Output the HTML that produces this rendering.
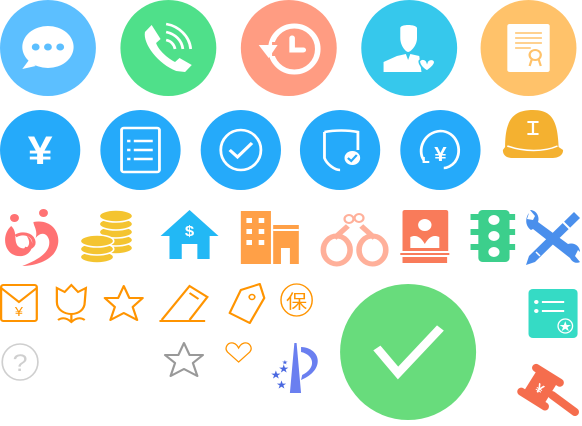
<!DOCTYPE html>
<html><head><meta charset="utf-8"><style>
html,body{margin:0;padding:0;background:#fff;width:582px;height:426px;overflow:hidden}
svg{display:block}
text{font-family:"Liberation Sans","Noto Sans CJK SC",sans-serif}
</style></head><body>
<svg width="582" height="426" viewBox="0 0 582 426" xmlns="http://www.w3.org/2000/svg">
<g transform="scale(1.115,1)">
<!-- Row 1 -->
<ellipse cx="43" cy="48" rx="43" ry="48" fill="#5cbfff"/>
<ellipse cx="43" cy="47" rx="23" ry="21" fill="#fff"/>
<path d="M26 60 L20 69 L32 66Z" fill="#fff"/>
<circle cx="32" cy="47" r="3.5" fill="#5cbfff"/><circle cx="43" cy="47" r="3.5" fill="#5cbfff"/><circle cx="54" cy="47" r="3.5" fill="#5cbfff"/>

<ellipse cx="151" cy="48" rx="43" ry="48" fill="#4fe08a"/>
<path d="M136 25 L130 32 C128 44 142 64 158 71 L166 72 L172 65 L161 58 L157 62 C150 58 142 50 140 43 L144 39 Z" fill="#fff"/>
<g fill="none" stroke="#fff" stroke-width="2.5"><path d="M149 24 C160 26 170 36 171 49"/><path d="M149 32 C157 34 163 40 164 49"/><path d="M149 40 C153 41 156 44 157 49"/></g>

<ellipse cx="259" cy="48" rx="43" ry="48" fill="#ff9c82"/>
<ellipse cx="264" cy="49" rx="21" ry="23" fill="none" stroke="#fff" stroke-width="5"/>
<rect x="244" y="42" width="8" height="14" fill="#ff9c82"/>
<path d="M232 45 L249 45 L241 58 Z" fill="#fff"/>
<path d="M262 38 L262 50 L272 50" fill="none" stroke="#fff" stroke-width="5" stroke-linecap="round"/>

<ellipse cx="367" cy="48" rx="43" ry="48" fill="#36c8ec"/>
<path d="M359 28 C359 24 373 24 374 28 L374 38 C374 46 368 52 366 52 C364 52 359 46 359 38Z" fill="#fff"/>
<path d="M344 62 L356 56 L364 54 L366 60 L368 54 L376 56 L378 72 L344 72Z" fill="#fff"/>
<path d="M376 61 C378 58 382 59 383 62 C384 59 389 58 390 62 C390 66 384 70 383 71 C381 70 376 66 376 61Z" fill="#fff" stroke="#36c8ec" stroke-width="1.5"/>

<ellipse cx="474" cy="48" rx="43" ry="48" fill="#ffc26a"/>
<rect x="455" y="24" width="38" height="48" rx="2" fill="#fff"/>
<g stroke="#ffc26a" stroke-width="1.5"><line x1="462" y1="33" x2="486" y2="33"/><line x1="462" y1="38" x2="486" y2="38"/><line x1="462" y1="43" x2="486" y2="43"/><line x1="462" y1="48" x2="476" y2="48"/></g>
<circle cx="480" cy="55" r="5" fill="none" stroke="#ffc26a" stroke-width="2"/>
<path d="M477 59 L475 66 M483 59 L485 66" stroke="#ffc26a" stroke-width="2"/>

<!-- Row 2 -->
<g fill="#25aafa">
<ellipse cx="36" cy="150" rx="36" ry="40"/>
<ellipse cx="126" cy="150" rx="36" ry="40"/>
<ellipse cx="216" cy="150" rx="36" ry="40"/>
<ellipse cx="305" cy="150" rx="36" ry="40"/>
<ellipse cx="395" cy="150" rx="36" ry="40"/>
</g>
<text x="36" y="164" font-size="40" font-weight="bold" fill="#fff" text-anchor="middle">¥</text>
<rect x="109" y="128" width="34" height="44" rx="2" fill="none" stroke="#fff" stroke-width="2.5"/>
<g stroke="#fff" stroke-width="2.5"><line x1="114" y1="141" x2="117" y2="141"/><line x1="120" y1="141" x2="137" y2="141"/><line x1="114" y1="150" x2="117" y2="150"/><line x1="120" y1="150" x2="137" y2="150"/><line x1="114" y1="159" x2="117" y2="159"/><line x1="120" y1="159" x2="137" y2="159"/></g>
<ellipse cx="216" cy="150" rx="18" ry="20" fill="none" stroke="#fff" stroke-width="2.5"/>
<path d="M206 150 L213 157 L226 143" fill="none" stroke="#fff" stroke-width="3"/>
<path d="M291 132 C300 130 312 130 321 132 L321 150 M291 132 L291 158 C293 164 300 170 305 170" fill="none" stroke="#fff" stroke-width="2.5"/>
<circle cx="316" cy="158" r="7" fill="#fff"/>
<path d="M312 158 L315 161 L320 155" fill="none" stroke="#25aafa" stroke-width="2"/>
<path d="M380 160 C374 150 380 132 395 131 C409 131 416 150 408 162 C405 166 401 168 398 168" fill="none" stroke="#fff" stroke-width="2.5"/>
<path d="M380 157 L380 162 L385 162" fill="none" stroke="#fff" stroke-width="2"/>
<text x="395" y="161" font-size="20" font-weight="bold" fill="#fff" text-anchor="middle">¥</text>

<!-- helmet -->
<path d="M453 147 C453 120 460 110 478 110 C496 110 500 122 501 147 L505 150 C505 156 500 158 495 158 L460 158 C455 158 451 156 451 150Z" fill="#f4b130"/>
<path d="M455 146 C470 152 488 152 500 146" fill="none" stroke="#fff" stroke-width="1.5"/>
<path d="M473 122 L483 122 M478 122 L478 134 M473 134 L483 134" stroke="#fff" stroke-width="2"/>

<!-- Row 3 -->
<circle cx="13" cy="218" r="4" fill="#ff7273"/><circle cx="39" cy="213" r="4" fill="#ff7273"/>
<path d="M10 226 C0 236 4 258 20 256 C30 254 32 240 24 236 C30 246 22 252 16 246 C12 240 16 232 10 226Z" fill="#ff7273"/>
<path d="M30 222 C50 218 58 240 48 254 C40 264 26 266 20 266 C34 260 46 252 44 240 C42 232 36 232 32 238 C34 230 30 226 30 222Z" fill="#ff7273"/>
<path d="M14 236 C20 232 28 234 30 240 C32 246 26 250 22 248" fill="none" stroke="#ff7273" stroke-width="3"/>

<g fill="#f4c430" stroke="#fff" stroke-width="1.5">
<ellipse cx="104" cy="248" rx="15" ry="6"/><ellipse cx="104" cy="240" rx="15" ry="6"/><ellipse cx="104" cy="232" rx="15" ry="6"/><ellipse cx="104" cy="224" rx="15" ry="6"/><ellipse cx="104" cy="216" rx="15" ry="6"/>
<ellipse cx="87" cy="257" rx="15" ry="6"/><ellipse cx="87" cy="249" rx="15" ry="6"/><ellipse cx="87" cy="241" rx="15" ry="6"/>
</g>

<path d="M170 210 L196 236 L188 236 L188 259 L152 259 L152 236 L144 236Z" fill="#22b8f5"/>
<rect x="163" y="244" width="14" height="15" fill="#fff"/>
<text x="170" y="236" font-size="15" font-weight="bold" fill="#fff" text-anchor="middle">$</text>

<g fill="#ffa047"><rect x="216" y="211" width="27" height="53"/><rect x="245" y="225" width="23" height="39"/></g>
<g fill="#fff"><rect x="221" y="218" width="5" height="5"/><rect x="232" y="218" width="5" height="5"/><rect x="221" y="229" width="5" height="5"/><rect x="232" y="229" width="5" height="5"/><rect x="221" y="240" width="5" height="5"/><rect x="232" y="240" width="5" height="5"/><rect x="245" y="229" width="23" height="2"/><rect x="252" y="248" width="8" height="16"/></g>

<g fill="none" stroke="#ffb09a" stroke-width="5"><ellipse cx="302" cy="250" rx="12" ry="14"/><ellipse cx="334" cy="250" rx="12" ry="14"/></g>
<g fill="none" stroke="#ffb09a" stroke-width="2"><circle cx="313" cy="219" r="4"/><circle cx="322" cy="218" r="4"/></g>
<path d="M300 238 L312 226 M336 238 L324 226" stroke="#ffb09a" stroke-width="5"/>

<rect x="361" y="210" width="41" height="45" rx="2" fill="#f97b5a"/>
<circle cx="381" cy="225" r="6" fill="#fff"/>
<path d="M368 248 L368 237 C374 234 378 238 381 244 C384 238 388 234 394 237 L394 248Z" fill="#fff"/>
<rect x="359" y="251" width="44" height="3" fill="#fff"/>
<rect x="361" y="257" width="40" height="6" fill="#f97b5a"/>
<rect x="359" y="253" width="44" height="2" fill="#f97b5a"/>

<rect x="429" y="210" width="28" height="52" rx="4" fill="#3ccf8c"/>
<rect x="422" y="214" width="40" height="6" fill="#3ccf8c"/><rect x="422" y="229" width="40" height="6" fill="#3ccf8c"/><rect x="422" y="244" width="40" height="6" fill="#3ccf8c"/>
<g fill="#fff"><circle cx="443" cy="220" r="5"/><circle cx="443" cy="236" r="5"/><circle cx="443" cy="252" r="5"/></g>

<!-- Row 4 -->
<rect x="1" y="285" width="32" height="36" rx="2" fill="none" stroke="#ff9400" stroke-width="2"/>
<path d="M1 288 L17 302 L33 288" fill="none" stroke="#ff9400" stroke-width="2"/>
<text x="17" y="316" font-size="13" fill="#ff9400" text-anchor="middle">¥</text>

<path d="M51 288 L58 292 L64 285 L70 292 L77 288 L76 302 C76 310 70 314 64 314 C58 314 51 310 51 302Z" fill="none" stroke="#ff9400" stroke-width="2"/>
<path d="M64 314 L64 322 M52 320 C56 317 60 318 64 322 C68 318 72 317 76 320" fill="none" stroke="#ff9400" stroke-width="2"/>

<path d="M111 286 L116 298 L128 298 L119 307 L123 320 L111 313 L99 320 L103 307 L94 298 L106 298Z" fill="none" stroke="#ff9400" stroke-width="2" stroke-linejoin="round"/>

<path d="M145 320 L170 286 L186 297 L170 320" fill="none" stroke="#ff9400" stroke-width="2"/>
<line x1="143" y1="321" x2="184" y2="321" stroke="#ff9400" stroke-width="2"/>
<line x1="170" y1="293" x2="178" y2="299" stroke="#ff9400" stroke-width="2"/>

<path d="M216 290 L233 284 L237 298 L224 323 L206 313 Z" fill="none" stroke="#ff9400" stroke-width="2" stroke-linejoin="round"/>
<circle cx="226" cy="297" r="2.5" fill="none" stroke="#ff9400" stroke-width="1.5"/>

<ellipse cx="266" cy="300" rx="14" ry="16" fill="none" stroke="#ff9400" stroke-width="1.3"/>
<text x="266" y="308" font-size="19" fill="#ff9400" text-anchor="middle" font-family="Noto Sans CJK SC, sans-serif">保</text>

<ellipse cx="366" cy="352" rx="61" ry="68" fill="#68dc7c"/>
<path d="M338 348 L357 373 L395 328" fill="none" stroke="#fff" stroke-width="8"/>

<rect x="474" y="289" width="44" height="49" rx="4" fill="#35dbc5"/>
<g fill="#fff"><circle cx="481" cy="302" r="2"/><circle cx="481" cy="311" r="2"/><rect x="486" y="301" width="20" height="2"/><rect x="486" y="310" width="20" height="2"/></g>
<ellipse cx="507" cy="326" rx="6.5" ry="7" fill="none" stroke="#fff" stroke-width="1.2"/>
<text x="507" y="330" font-size="11" fill="#fff" text-anchor="middle">★</text>

<!-- Row 5 -->
<ellipse cx="18" cy="362" rx="16" ry="18" fill="none" stroke="#cfcfcf" stroke-width="1.5"/>
<text x="18" y="371" font-size="24" fill="#cfcfcf" text-anchor="middle">?</text>

<path d="M165 343 L170 355 L182 355 L173 363 L177 376 L165 369 L153 376 L157 363 L148 355 L160 355Z" fill="none" stroke="#999" stroke-width="2" stroke-linejoin="round"/>

<path d="M214 362 L204 352 C201 348 204 342 209 343 C212 344 213 346 214 348 C215 346 216 344 219 343 C224 342 227 348 224 352Z" fill="none" stroke="#ff9400" stroke-width="1.2"/>

<path d="M264 343 L260 393 L270 393 L266 343Z" fill="#6a7ff0"/>
<path d="M270 347 C288 348 292 370 270 380 L271 375 C284 368 282 355 270 352Z" fill="#6a7ff0"/>
<g fill="#4a68e0" font-size="9"><text x="250" y="372">★</text><text x="243" y="378">★</text><text x="248" y="388">★</text><text x="253" y="364" font-size="5">★</text></g>
</g>

<!-- tools (real coords) -->
<path d="M574 212 L580 218 L535 262 L526 265 L529 256 Z" fill="#4a8fec"/>
<path d="M563 222 L570 229" stroke="#fff" stroke-width="2"/>
<path d="M536 252 L540 256" stroke="#fff" stroke-width="1.5"/>
<path d="M529 213 C525 218 525 226 531 230 L533 229 L570 258 C572 262 576 264 580 262 L575 256 L578 250 L580 252 C580 246 574 242 568 244 L538 222 C540 216 536 210 530 210 L535 216 L533 220 L527 219 Z" fill="#4a8fec"/>

<!-- gavel (real coords) -->
<g transform="rotate(32 540 388)">
<rect x="522" y="369" width="36" height="8" rx="4" fill="#f56d4d"/>
<rect x="528" y="376" width="24" height="22" fill="#f56d4d"/>
<rect x="522" y="397" width="36" height="8" rx="4" fill="#f56d4d"/>
<text x="540" y="393" font-size="13" font-weight="bold" fill="#fff" text-anchor="middle">¥</text>
</g>
<path d="M552 395 L575 412" stroke="#f56d4d" stroke-width="8" stroke-linecap="round"/>
</svg>
</body></html>
